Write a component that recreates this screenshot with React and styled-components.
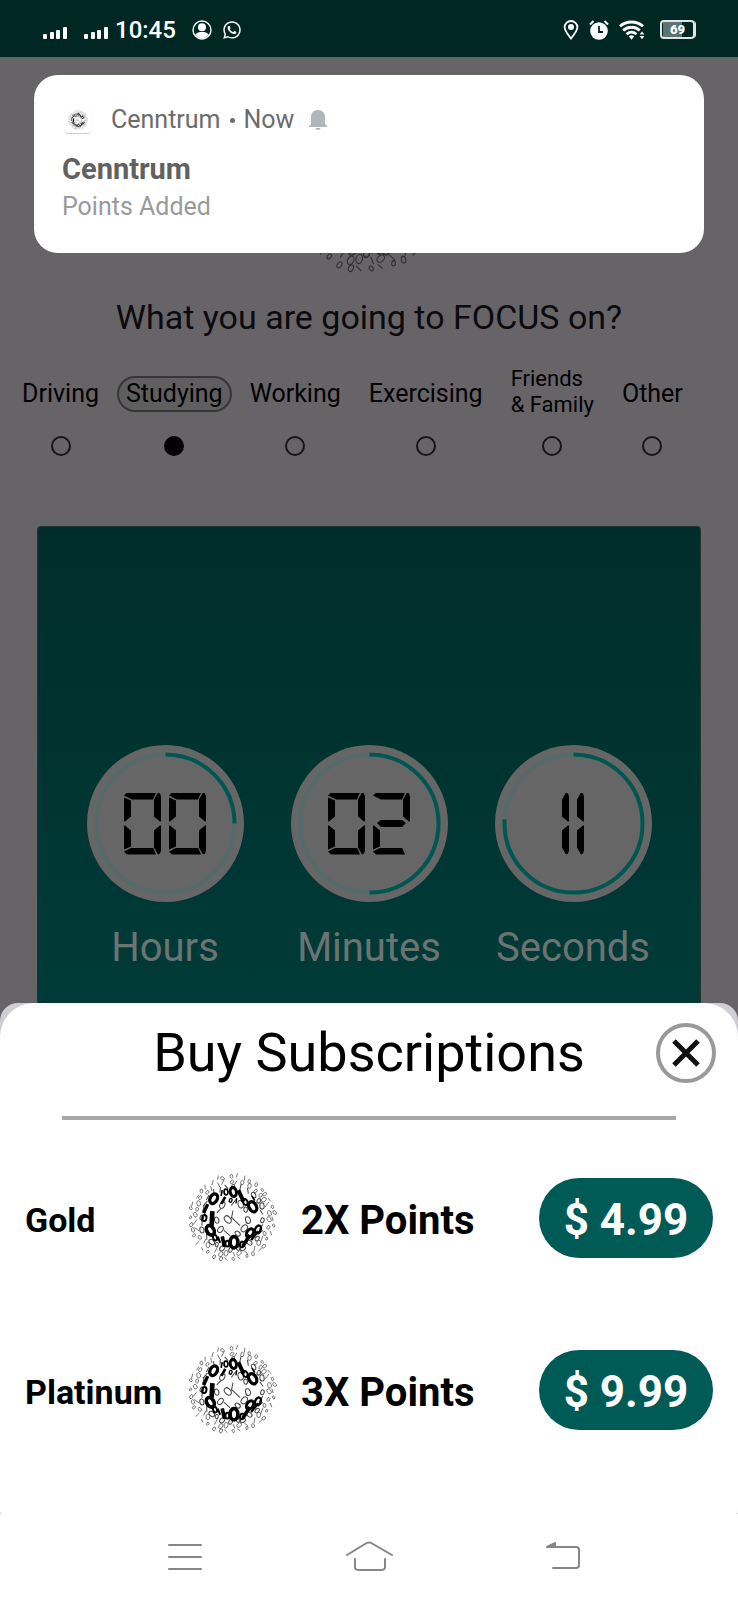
import React from "react";
import styled, { createGlobalStyle, css } from "styled-components";
import { FaWhatsapp } from "react-icons/fa6";

const GlobalStyle = createGlobalStyle`
  *, *::before, *::after { box-sizing: border-box; }
  body { margin: 0; background: #676468; font-family: Roboto, "Liberation Sans", sans-serif; }
  h1, h2, h3, p { margin: 0; font-weight: 400; }
  button { font: inherit; padding: 0; border: 0; background: none; cursor: pointer; }
  svg { display: block; flex: none; }
`;

const Page = styled.div`
  position: relative;
  display: flex;
  flex-direction: column;
  min-height: 100vh;
`;

/* ---------- status bar ---------- */

const StatusBar = styled.header`
  display: flex;
  align-items: center;
  justify-content: space-between;
  height: 57px;
  padding: 2px 41px 0 43px;
  background: #002723;
  color: #fff;
`;

const StatusGroup = styled.div`
  display: flex;
  align-items: center;
  gap: ${(p) => p.$gap}px;
`;

const Clock = styled.time`
  margin-left: -10px;
  font-size: 24px;
  line-height: 28px;
  font-weight: 500;
`;

const Battery = styled.span`
  display: flex;
  align-items: center;
  justify-content: center;
  width: 35px;
  height: 19px;
  margin: 0 2px 0 5px;
  border: 2px solid #dfe7e6;
  border-radius: 4px;
  background: linear-gradient(to right, transparent 1px, #5d7572 1px, #5d7572 20px, transparent 20px);
  box-shadow: 2px 0 0 -1px #dfe7e6;
  font-size: 13px;
  line-height: 15px;
  font-weight: 900;
`;

function Signal() {
  return (
    <svg width="25" height="20" viewBox="0 0 25 20" fill="#fff" aria-hidden="true">
      <rect x="0" y="14" width="4" height="5" rx="1" />
      <rect x="7" y="12" width="4" height="7" rx="1" />
      <rect x="13" y="10" width="4" height="9" rx="1" />
      <rect x="20" y="7" width="4" height="12" rx="1" />
    </svg>
  );
}

function AccountIcon() {
  return (
    <svg width="20" height="20" viewBox="0 0 20 20" aria-hidden="true">
      <circle cx="10" cy="10" r="9" fill="none" stroke="#fff" strokeWidth="1.4" />
      <circle cx="10" cy="7.2" r="4" fill="#fff" />
      <path d="M3.4 14.6C5 12.6 7 12 10 12s5 .6 6.600 2.600C15 17 13 18.200 10 18.200S5 17 3.400 14.600z" fill="#fff" />
    </svg>
  );
}

function PinIcon() {
  return (
    <svg width="16" height="20" viewBox="0 0 16 20" aria-hidden="true">
      <path d="M8 18.500C4.500 13.800 1.600 10.600 1.600 7.200a6.400 6.200 0 0 1 12.800 0C14.400 10.600 11.500 13.800 8 18.500z" fill="none" stroke="#fff" strokeWidth="1.8" />
      <circle cx="8" cy="7" r="3" fill="#fff" />
    </svg>
  );
}

function AlarmIcon() {
  return (
    <svg width="20" height="20" viewBox="0 0 20 20" aria-hidden="true">
      <circle cx="10" cy="11" r="8.800" fill="#fff" />
      <path d="M1 4.500L4.500 1M19 4.500L15.500 1" stroke="#fff" strokeWidth="2" />
      <path d="M10 6v6h4" fill="none" stroke="#002723" strokeWidth="1.800" />
    </svg>
  );
}

function WifiIcon() {
  return (
    <svg width="26" height="20" viewBox="0 0 26 20" aria-hidden="true">
      <g fill="none" stroke="#fff" strokeWidth="2.800">
        <path d="M1 6.200c6.500-5.600 16.500-5.600 23 0" />
        <path d="M4.200 10.400c5-4.200 11.600-4.200 16.600 0" />
        <path d="M7.500 14.200c3.200-2.700 6.800-2.700 10 0" />
      </g>
      <path d="M9.800 16.200c1.800-1.200 3.600-1.200 5.400 0L12.500 19.800z" fill="#fff" />
      <path d="M20.600 14.600L23 11.400l2.400 3.200zM20.600 16L23 19.200l2.400-3.200z" fill="#fff" />
    </svg>
  );
}

/* ---------- binary-digits logo ---------- */

// The heavy "C" ring. Each mark: shape (z = ring, o = bar), x, y, half height, angle, stroke.
const HEAVY = [
  ["z", 80, 77, 18, 28, 10], ["o", 109, 82, 12, 28, 8], ["z", 117, 57, 10, -4, 5], ["o", 104, 60, 9, 10, 5],
  ["z", 139, 57, 16, -10, 9], ["o", 162, 69, 19, -24, 12], ["z", 175, 87, 11, -20, 6], ["z", 197, 101, 19, -28, 10],
  ["o", 199, 76, 8, -30, 5], ["o", 56, 107, 15, 24, 10], ["z", 52, 135, 11, 10, 6], ["o", 75, 136, 22, 3, 14],
  ["z", 70, 172, 18, -32, 11], ["z", 84, 194, 10, -20, 6], ["o", 96, 200, 10, -20, 6], ["o", 109, 206, 16, -12, 11],
  ["z", 121, 212, 10, 0, 6], ["z", 141, 208, 20, 0, 11], ["z", 165, 214, 10, 16, 6], ["o", 178, 203, 20, 32, 11],
  ["z", 189, 180, 16, 34, 9], ["z", 213, 169, 14, 24, 7], ["o", 203, 188, 17, 38, 7], ["o", 148, 83, 8, 10, 4],
  ["z", 131, 82, 7, 20, 4],
];

const RINGS = [
  { r: 14, n: 3, h: 16, w: 3 },
  { r: 46, n: 11, h: 12, w: 3 },
  { r: 94, n: 28, h: 10, w: 3 },
  { r: 110, n: 34, h: 9, w: 2 },
  { r: 125, n: 38, h: 7, w: 2 },
];

const noise = (n) => {
  const v = Math.sin(n * 127.1 + 11.7) * 43758.5453;
  return v - Math.floor(v);
};

const LIGHT = RINGS.flatMap(({ r, n, h, w }, ring) =>
  Array.from({ length: n }, (_, i) => {
    const seed = ring * 71 + i;
    const a = ((i + noise(seed) * 0.5) / n) * Math.PI * 2;
    const d = r + (noise(seed + 500) - 0.5) * 8;
    return [
      noise(seed + 900) > 0.45 ? "z" : "o",
      135 + Math.cos(a) * d,
      135 + Math.sin(a) * d,
      h * (0.75 + noise(seed + 300) * 0.4),
      (noise(seed + 700) - 0.5) * 110,
      w,
    ];
  })
);

function Mark({ item: [kind, x, y, h, angle, w] }) {
  const turn = `rotate(${angle} ${x} ${y})`;
  return kind === "z" ? (
    <ellipse cx={x} cy={y} rx={h * 0.58} ry={h * 0.85} strokeWidth={w} transform={turn} />
  ) : (
    <line x1={x} x2={x} y1={y - h} y2={y + h} strokeWidth={w} transform={turn} />
  );
}

function Logo({ size, light = "#444" }) {
  return (
    <svg width={size} height={size} viewBox="0 0 270 270" fill="none" role="img" aria-label="Cenntrum logo">
      <g stroke={light}>{LIGHT.map((m, i) => <Mark key={i} item={m} />)}</g>
      <g stroke="#000">{HEAVY.map((m, i) => <Mark key={i} item={m} />)}</g>
    </svg>
  );
}

/* ---------- notification ---------- */

const Notification = styled.section`
  position: absolute;
  top: 75px;
  left: 34px;
  right: 34px;
  padding: 30px 28px;
  border-radius: 24px;
  background: #fff;
`;

const NotificationMeta = styled.div`
  display: flex;
  align-items: center;
  gap: 9px;
  height: 30px;
  color: #6b6b6b;
  font-size: 25px;
  line-height: 30px;
`;

const AppIcon = styled.span`
  display: flex;
  align-items: center;
  justify-content: center;
  width: 26px;
  height: 26px;
  margin: 0 11px 0 3px;
  border-radius: 3px;
  box-shadow: 0 1px 1px #ccc;
`;

const Dot = styled.span`
  width: 5px;
  height: 5px;
  border-radius: 50%;
  background: #6b6b6b;
`;

const NotificationTitle = styled.h3`
  margin-top: 17px;
  color: #616161;
  font-size: 29px;
  line-height: 34px;
  font-weight: 700;
`;

const NotificationText = styled.p`
  margin-top: 5px;
  color: #9a9a9a;
  font-size: 25px;
  line-height: 32px;
`;

const BellSvg = styled.svg`
  margin-left: 6px;
`;

/* ---------- focus screen ---------- */

const Main = styled.main`
  display: flex;
  flex-direction: column;
  padding-top: 70px;
`;

const BrandLogo = styled.div`
  align-self: center;
`;

const Question = styled.h1`
  margin-top: 22px;
  color: #0b0a0c;
  font-size: 34px;
  line-height: 40px;
  text-align: center;
`;

const Options = styled.div`
  display: flex;
  justify-content: flex-start;
  gap: 18px;
  margin-top: 29px;
  padding: 0 22px;
`;

const Option = styled.label`
  display: flex;
  flex-direction: column;
  align-items: center;
  gap: 18px;
  padding-left: ${(p) => (p.$spaced ? 10 : 0)}px;
  color: #000;
`;

const OptionText = styled.span`
  display: flex;
  align-items: center;
  height: 52px;
  padding-top: ${(p) => (p.$small ? 0 : 4)}px;
  font-size: ${(p) => (p.$small ? 22 : 25)}px;
  line-height: 26px;
  white-space: pre;
`;

const Chip = styled.span`
  ${(p) =>
    p.$selected &&
    css`
      padding: 3px 7px;
      border: 2px solid #353635;
      border-radius: 18px;
      background: #5e5f5e;
    `}
`;

const Radio = styled.input`
  appearance: none;
  width: 20px;
  height: 20px;
  margin: 0;
  border: 2px solid #151416;
  border-radius: 50%;
  &:checked { background: #000; border-color: #000; }
`;

const TimerPanel = styled.section`
  display: flex;
  justify-content: center;
  gap: 47px;
  margin: 70px 37px 0;
  padding: 218px 0 32px;
  border: 1px solid #233332;
  border-bottom: 0;
  border-radius: 4px 4px 0 0;
  background: linear-gradient(#002d2a, #003b38);
`;

const Unit = styled.div`
  display: flex;
  flex-direction: column;
  align-items: center;
  gap: 22px;
  width: 157px;
`;

const Dial = styled.div`
  display: grid;
  place-items: center;
  width: 157px;
  height: 157px;
  border-radius: 50%;
  background: #666;
  > * { grid-area: 1 / 1; }
`;

const UnitName = styled.span`
  color: #6c7473;
  font-size: 40px;
  line-height: 47px;
`;

const Readout = styled.div`
  display: flex;
  gap: 8px;
`;

const DigitBox = styled.span`
  display: grid;
  grid-template-columns: ${(p) => (p.$narrow ? "7px" : "7px 23px 7px")};
  grid-template-rows: 30px 2px 30px;
`;

const SEGMENT_STYLES = {
  a: css`grid-area: 1 / 1 / 2 / -1; height: 7px; clip-path: polygon(0 3px, 3px 0, 32px 0, 29px 7px, 8px 7px);`,
  b: css`grid-row: 1; grid-column: -2 / -1; clip-path: polygon(4px 0, 6px 1px, 7px 4px, 7px 29px, 6px 29px, 0 24px, 0 7px);`,
  c: css`grid-row: 3; grid-column: -2 / -1; clip-path: polygon(6px 1px, 7px 1px, 7px 26px, 6px 29px, 4px 30px, 0 23px, 0 6px);`,
  d: css`grid-area: 3 / 1 / 4 / -1; height: 7px; align-self: end; clip-path: polygon(8px 0, 29px 0, 32px 7px, 3px 7px, 0 4px);`,
  e: css`grid-area: 3 / 1; clip-path: polygon(0 1px, 1px 1px, 7px 6px, 7px 22px, 0 25px);`,
  f: css`grid-area: 1 / 1; clip-path: polygon(0 5px, 7px 8px, 7px 24px, 1px 29px, 0 29px);`,
  g: css`grid-area: 1 / 1 / 4 / -1; height: 7px; align-self: center; clip-path: polygon(4px 3px, 8px 0, 29px 0, 33px 3px, 29px 7px, 8px 7px);`,
};

const Segment = styled.i`
  background: #000;
  ${(p) => SEGMENT_STYLES[p.$name]}
`;

const LIT = { 0: "abcdef", 1: "bc", 2: "abged" };

function Digits({ value }) {
  return (
    <Readout role="img" aria-label={value}>
      {[...value].map((d, i) => (
        <DigitBox key={i} $narrow={d === "1"}>
          {[...LIT[d]].map((s) => <Segment key={s} $name={s} />)}
        </DigitBox>
      ))}
    </Readout>
  );
}

function TimerUnit({ name, value, progress }) {
  return (
    <Unit>
      <Dial>
        <svg width="157" height="157" viewBox="0 0 157 157" fill="none" aria-hidden="true">
          <circle cx="78.500" cy="78.500" r="69" stroke="#546b69" strokeWidth="4" />
          <circle
            cx="78.500"
            cy="78.500"
            r="69"
            stroke="#005652"
            strokeWidth="4"
            pathLength="100"
            strokeDasharray={`${progress} 100`}
            transform="rotate(-90 78.500 78.500)"
          />
        </svg>
        <Digits value={value} />
      </Dial>
      <UnitName>{name}</UnitName>
    </Unit>
  );
}

/* ---------- subscription sheet ---------- */

const SheetEdge = styled.div`
  border-radius: 18px 18px 0 0;
  background: #cfced2;
`;

const Sheet = styled.section`
  padding: 18px 0 38px;
  border-radius: 34px 34px 3px 3px;
  background: #fff;
`;

const SheetHeader = styled.header`
  display: grid;
  grid-template-columns: 1fr auto 1fr;
  align-items: center;
  height: 64px;
  padding: 0 22px;
`;

const SheetTitle = styled.h2`
  grid-column: 2;
  color: #000;
  font-size: 54px;
  line-height: 64px;
`;

const CloseButton = styled.button`
  justify-self: end;
  display: grid;
  place-items: center;
  width: 60px;
  height: 60px;
  border: 4px solid #999;
  border-radius: 50%;
`;

const Rule = styled.hr`
  height: 4px;
  margin: 31px 62px 12px;
  border: 0;
  background: #a8a8a8;
`;

const Plans = styled.ul`
  margin: 0;
  padding: 0;
  list-style: none;
`;

const Plan = styled.li`
  display: grid;
  grid-template-columns: 162px 90px 1fr auto;
  align-items: center;
  height: 172px;
  padding: 0 25px;
  color: #000;
  font-weight: 700;
`;

const PlanName = styled.span`
  padding-top: 4px;
  font-size: 34px;
  line-height: 40px;
`;

const PlanPerk = styled.span`
  padding: 6px 0 0 24px;
  font-size: 40px;
  line-height: 48px;
`;

const PriceButton = styled.button`
  width: 174px;
  height: 80px;
  padding-top: 4px;
  border-radius: 40px;
  background: #005b57;
  color: #fff;
  font-size: 44px;
  line-height: 52px;
  font-weight: 700;
`;

const NavBar = styled.nav`
  display: flex;
  flex: 1 0 86px;
  align-items: center;
  justify-content: space-between;
  padding: 0 21%;
  background: #fff;
`;

const NavButton = styled.button`
  width: 48px;
  height: 48px;
`;

function NavIcon({ d }) {
  return (
    <svg width="48" height="48" viewBox="0 0 48 48" fill="none" stroke="#868686" strokeWidth="2" strokeLinecap="round" strokeLinejoin="round" aria-hidden="true">
      <path d={d} />
    </svg>
  );
}

const OPTIONS = [
  { text: "Driving" },
  { text: "Studying", selected: true },
  { text: "Working" },
  { text: "Exercising", spaced: true },
  { text: "Friends\n& Family", spaced: true, small: true },
  { text: "Other", spaced: true },
];

const PLANS = [
  { name: "Gold", perk: "2X Points", price: "$ 4.99" },
  { name: "Platinum", perk: "3X Points", price: "$ 9.99" },
];

const NAV = [
  { label: "Recent apps", d: "M14 12H46M14 24H46M14 36H46" },
  { label: "Home", d: "M2 22L20 11Q24 8 28 11L47 22M10 26V34Q10 37 14 37H36Q40 37 40 34V26" },
  { label: "Back", d: "M18 35H41Q44 35 44 32V17Q44 14 41 14H12L20 10V14M14 13.500L19 11.500" },
];

export default function App() {
  return (
    <>
      <GlobalStyle />
      <Page>
        <StatusBar>
          <StatusGroup $gap={16}>
            <Signal />
            <Signal />
            <Clock>10:45</Clock>
            <StatusGroup $gap={10}>
              <AccountIcon />
              <FaWhatsapp size={20} />
            </StatusGroup>
          </StatusGroup>
          <StatusGroup $gap={10}>
            <PinIcon />
            <AlarmIcon />
            <WifiIcon />
            <Battery>69</Battery>
          </StatusGroup>
        </StatusBar>

        <Main>
          <BrandLogo><Logo size={148} light="#302e32" /></BrandLogo>
          <Question>What you are going to FOCUS on?</Question>
          <Options role="radiogroup" aria-label="Focus">
            {OPTIONS.map((o) => (
              <Option key={o.text} $spaced={o.spaced}>
                <OptionText $small={o.small}>
                  <Chip $selected={o.selected}>{o.text}</Chip>
                </OptionText>
                <Radio type="radio" name="focus" defaultChecked={o.selected} />
              </Option>
            ))}
          </Options>
          <TimerPanel>
            <TimerUnit name="Hours" value="00" progress={25} />
            <TimerUnit name="Minutes" value="02" progress={50} />
            <TimerUnit name="Seconds" value="11" progress={76} />
          </TimerPanel>
        </Main>

        <SheetEdge>
          <Sheet>
            <SheetHeader>
              <SheetTitle>Buy Subscriptions</SheetTitle>
              <CloseButton aria-label="Close">
                <svg width="28" height="28" viewBox="0 0 28 28" stroke="#111" strokeWidth="5" aria-hidden="true">
                  <path d="M2 2L26 26M26 2L2 26" />
                </svg>
              </CloseButton>
            </SheetHeader>
            <Rule />
            <Plans>
              {PLANS.map((p) => (
                <Plan key={p.name}>
                  <PlanName>{p.name}</PlanName>
                  <Logo size={90} />
                  <PlanPerk>{p.perk}</PlanPerk>
                  <PriceButton>{p.price}</PriceButton>
                </Plan>
              ))}
            </Plans>
          </Sheet>
        </SheetEdge>

        <NavBar>
          {NAV.map((n) => (
            <NavButton key={n.label} aria-label={n.label}>
              <NavIcon d={n.d} />
            </NavButton>
          ))}
        </NavBar>

        <Notification>
          <NotificationMeta>
            <AppIcon><Logo size={20} /></AppIcon>
            <span>Cenntrum</span>
            <Dot />
            <span>Now</span>
            <BellSvg width="18" height="20" viewBox="0 0 18 20" fill="#b0b7ba" aria-hidden="true">
              <path d="M9 0C4.500 0 2 3 2 7v7l-2 2v1h18v-1l-2-2V7c0-4-2.500-7-7-7zM6.500 18h5a2.500 2 0 0 1-5 0z" />
            </BellSvg>
          </NotificationMeta>
          <NotificationTitle>Cenntrum</NotificationTitle>
          <NotificationText>Points Added</NotificationText>
        </Notification>
      </Page>
    </>
  );
}
